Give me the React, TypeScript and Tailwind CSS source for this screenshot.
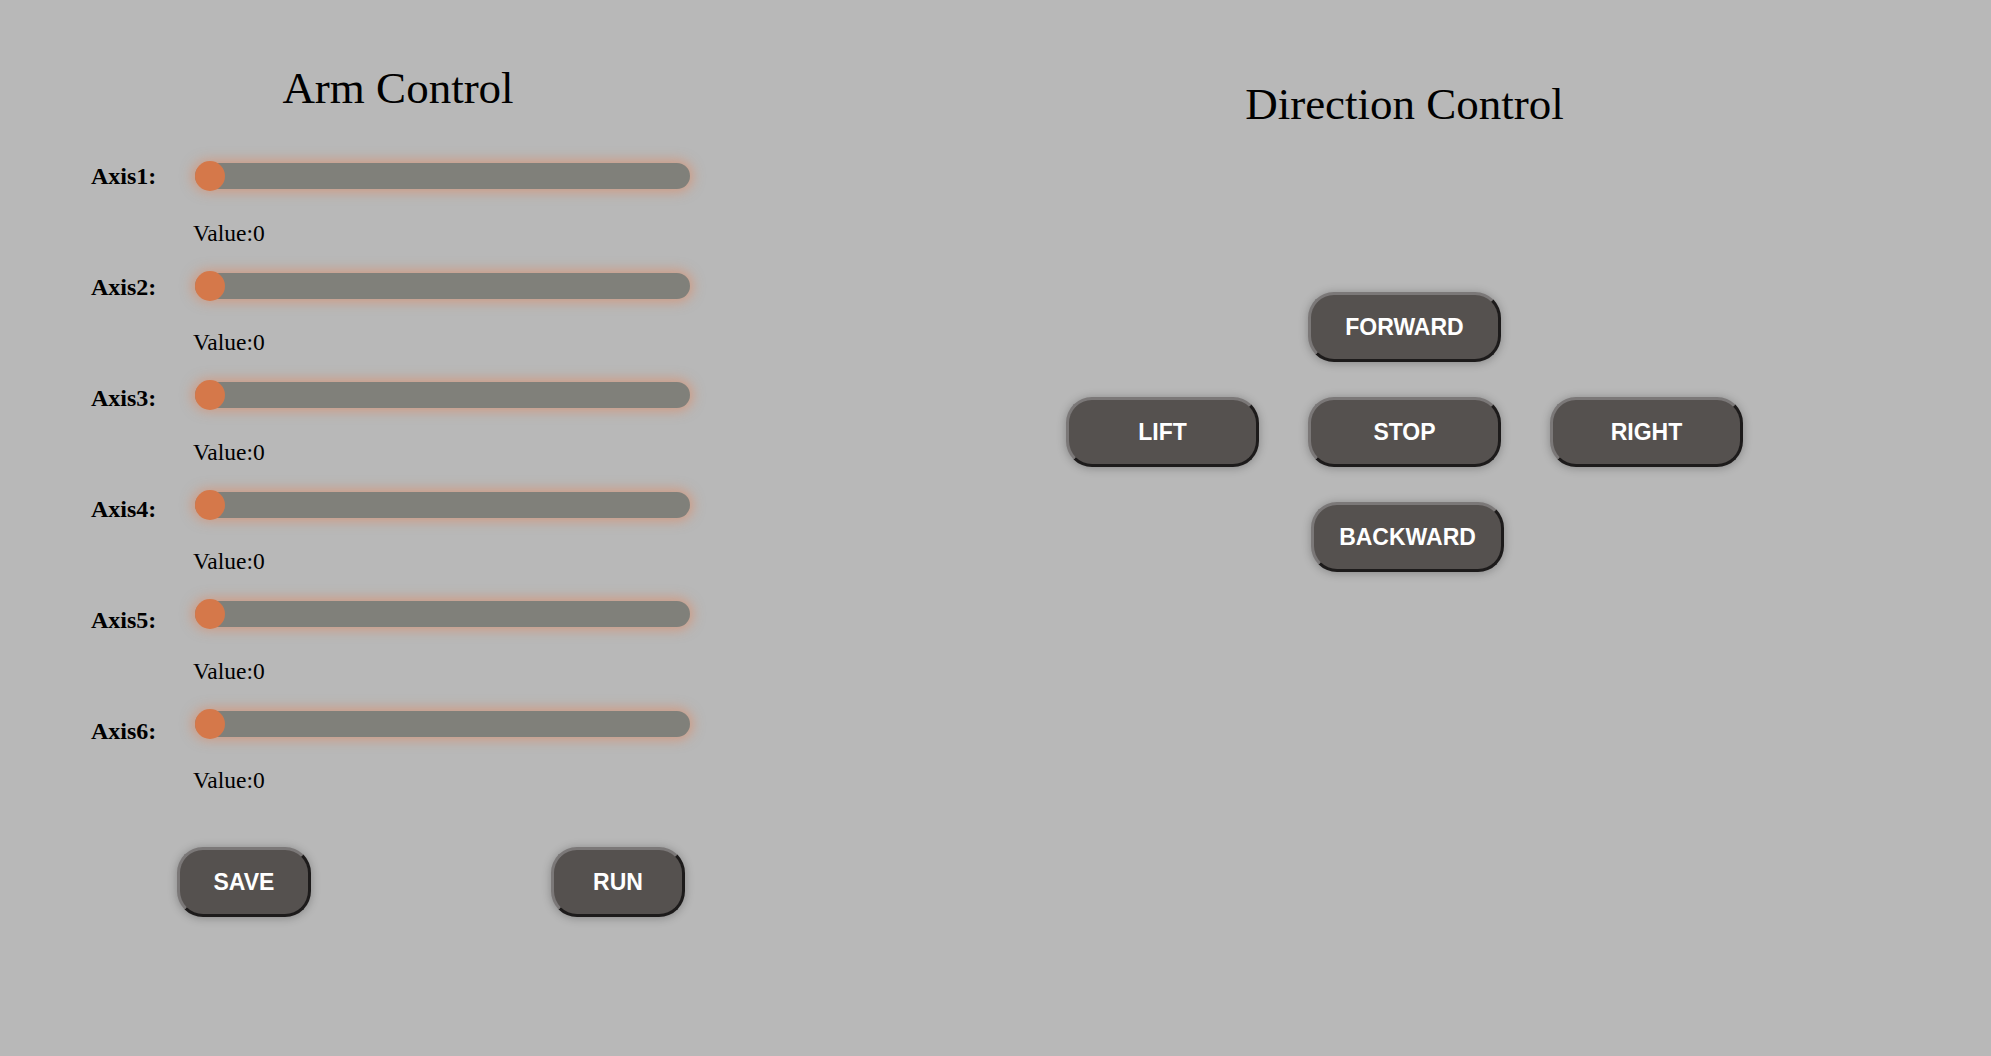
import React from "react";

const axes = ["Axis1:", "Axis2:", "Axis3:", "Axis4:", "Axis5:", "Axis6:"];

function Btn({ label, w }: { label: string; w: string }) {
  return (
    <button
      className={`${w} h-[70px] rounded-[26px] border-[3px] border-t-[#7b7878] border-l-[#7b7878] border-b-[#1d1b1b] border-r-[#1d1b1b] bg-[#55514f] text-white font-bold text-[23px] leading-none font-['Liberation_Sans',Arial,sans-serif] shadow-[0_1px_10px_rgba(0,0,0,0.28)] flex items-center justify-center`}
    >
      {label}
    </button>
  );
}

function Slider() {
  return (
    <div className="relative h-[30px] flex items-center">
      <div className="w-full h-[26px] rounded-full bg-[#80807a] shadow-[0_0_12px_3px_rgba(232,128,82,0.5)]" />
      <div className="absolute left-0 top-0 w-[30px] h-[30px] rounded-full bg-[#d5784a]" />
    </div>
  );
}

export default function App() {
  return (
    <div className="w-full h-[1056px] bg-[#b8b8b8] flex font-['Liberation_Serif','Times_New_Roman',serif] text-black overflow-hidden">
      <div className="w-[796px] shrink-0 pt-[62px]">
        <h1 className="text-center text-[45px] leading-[52px] font-normal">Arm Control</h1>
        <div className="flex items-start ml-[91px] mt-[47px]">
          <div className="w-[104px] pt-[2px] flex flex-col">
            {axes.map((a) => (
              <div key={a} className="h-[111px] text-[24px] leading-[26px] font-bold">
                {a}
              </div>
            ))}
          </div>
          <div className="w-[495px] flex flex-col">
            {axes.map((a) => (
              <div key={a} className="h-[109.5px]">
                <Slider />
                <div className="mt-[28.5px] -ml-[2px] text-[23.5px] leading-[26px]">Value:0</div>
              </div>
            ))}
          </div>
        </div>
        <div className="ml-[177px] w-[508px] mt-[18px] flex justify-between">
          <Btn label="SAVE" w="w-[134px]" />
          <Btn label="RUN" w="w-[134px]" />
        </div>
      </div>
      <div className="flex-1 pl-[22px] pt-[78px]">
        <h1 className="text-center text-[45px] leading-[52px] font-normal">Direction Control</h1>
        <div className="mt-[162px] flex flex-col items-center gap-[35px]">
          <Btn label="FORWARD" w="w-[193px]" />
          <div className="flex gap-[49px]">
            <Btn label="LIFT" w="w-[193px]" />
            <Btn label="STOP" w="w-[193px]" />
            <Btn label="RIGHT" w="w-[193px]" />
          </div>
          <div className="pl-[6px]">
            <Btn label="BACKWARD" w="w-[193px]" />
          </div>
        </div>
      </div>
    </div>
  );
}
